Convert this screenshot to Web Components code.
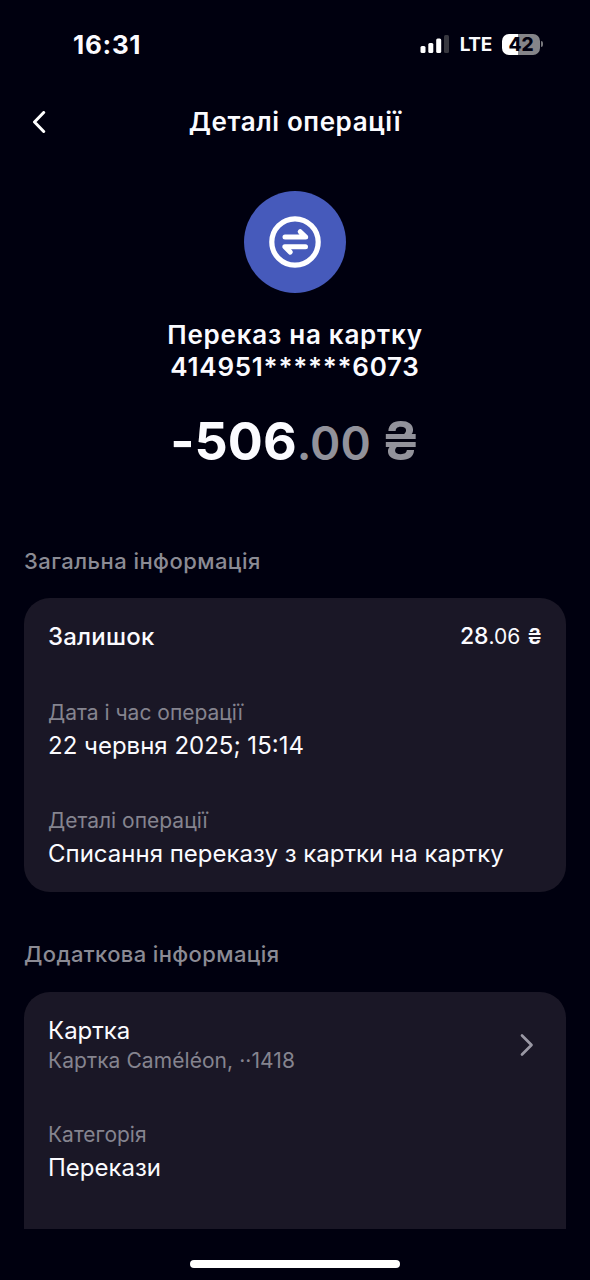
<!DOCTYPE html>
<html lang="uk">
<head>
  <meta charset="utf-8">
  <title>Деталі операції</title>
  <style>
    html, body {
      margin: 0;
      height: 100%;
      background: #00000f;
    }
    body {
      overflow: hidden;
      color: #fbfbff;
      font-family: Inter, "Liberation Sans", sans-serif;
    }
  </style>
</head>
<body>
  <operation-screen>
    <status-bar slot="status" time="16:31" network="LTE" battery="42"></status-bar>
    <nav-header slot="header">Деталі операції</nav-header>

    <operation-summary>
      <span slot="name">Переказ на картку</span>
      <span slot="number">414951******6073</span>
      <span slot="whole">-506</span>
      <span slot="cents">.00</span>
      <span slot="currency">₴</span>
    </operation-summary>

    <info-section>
      <span slot="title">Загальна інформація</span>
      <balance-row label="Залишок" whole="28" cents=".06" currency="₴"></balance-row>
      <info-field style="--gap-top: 46px; --gap: 3px">
        <span slot="label">Дата і час операції</span>
        <span slot="value">22 червня 2025; 15:14</span>
      </info-field>
      <info-field style="--gap-top: 45px; --gap: 3px">
        <span slot="label">Деталі операції</span>
        <span slot="value">Списання переказу з картки на картку</span>
      </info-field>
    </info-section>

    <info-section open-end>
      <span slot="title">Додаткова інформація</span>
      <link-row>
        <span slot="title">Картка</span>
        <span slot="subtitle">Картка Caméléon, ··1418</span>
      </link-row>
      <info-field style="--gap-top: 46px; --gap: 3px">
        <span slot="label">Категорія</span>
        <span slot="value">Перекази</span>
      </info-field>
    </info-section>

    <home-indicator slot="footer"></home-indicator>
  </operation-screen>

  <script>
    class BaseElement extends HTMLElement {
      constructor() {
        super();
        this.attachShadow({ mode: 'open' });
        const template = document.createElement('template');
        template.innerHTML = this.constructor.markup;
        this.shadowRoot.appendChild(template.content.cloneNode(true));
      }

      connectedCallback() {
        // fill every [data-attr] node with the attribute of that name
        this.shadowRoot.querySelectorAll('[data-attr]').forEach((node) => {
          node.textContent = this.getAttribute(node.dataset.attr);
        });
      }
    }

    class OperationScreen extends BaseElement {
      static markup = `
        <style>
          :host {
            display: flex;
            flex-direction: column;
            height: 1280px;
            width: 590px;
            overflow: hidden;
          }
          main {
            flex: 1;
            min-height: 0;
            overflow: hidden;
            padding: 0 24px;
          }
        </style>
        <slot name="status"></slot>
        <slot name="header"></slot>
        <main><slot></slot></main>
        <slot name="footer"></slot>
      `;
    }

    class StatusBar extends BaseElement {
      static markup = `
        <style>
          :host {
            display: flex;
            align-items: center;
            justify-content: space-between;
            height: 88px;
            padding: 0 47px 0 73px;
            flex: none;
            box-sizing: border-box;
          }
          .time {
            font-size: 26px;
            font-weight: 700;
            letter-spacing: 0.7px;
          }
          .right {
            display: flex;
            align-items: center;
          }
          .network {
            font-size: 19px;
            font-weight: 650;
            letter-spacing: -0.3px;
            margin: 1px 10px 0 10px;
          }
          .battery {
            width: 38px;
            height: 21px;
            border-radius: 7px;
            background: linear-gradient(90deg, #fff 42%, #858589 42%);
            color: #00000f;
            font-size: 19px;
            font-weight: 800;
            line-height: 21px;
            text-align: center;
          }
          .tip {
            width: 2px;
            height: 6px;
            margin-left: 1px;
            border-radius: 0 3px 3px 0;
            background: #77777c;
          }
        </style>
        <span class="time" data-attr="time"></span>
        <div class="right">
          <svg width="30" height="20" viewBox="0 0 30 20">
            <rect x="0.5" y="12" width="5" height="7" rx="1.5" fill="#fff"/>
            <rect x="8.3" y="9" width="5" height="10" rx="1.5" fill="#fff"/>
            <rect x="16.2" y="4.500" width="5" height="14.500" rx="1.5" fill="#fff"/>
            <rect x="24" y="1" width="5" height="18" rx="1.5" fill="#37373f"/>
          </svg>
          <span class="network" data-attr="network"></span>
          <div class="battery" data-attr="battery"></div>
          <div class="tip"></div>
        </div>
      `;
    }

    class NavHeader extends BaseElement {
      static markup = `
        <style>
          :host {
            display: grid;
            grid-template-columns: 60px 1fr 60px;
            align-items: center;
            height: 68px;
            flex: none;
          }
          svg {
            margin-left: 32px;
          }
          h1 {
            margin: 0;
            font-size: 26px;
            font-weight: 600;
            line-height: 32px;
            letter-spacing: 0.6px;
            text-align: center;
          }
        </style>
        <svg width="14" height="22" viewBox="0 0 14 22" fill="none" stroke="#fff" stroke-width="3" stroke-linecap="round" stroke-linejoin="round">
          <path d="M11.700 1.500 2.500 11l9.200 9.500"/>
        </svg>
        <h1><slot></slot></h1>
      `;
    }

    class OperationSummary extends BaseElement {
      static markup = `
        <style>
          :host {
            display: flex;
            flex-direction: column;
            align-items: center;
            padding-top: 35px;
            font-feature-settings: "calt" 0;
          }
          .icon {
            display: flex;
            align-items: center;
            justify-content: center;
            width: 102px;
            height: 102px;
            border-radius: 50%;
            background: #465abb;
          }
          .name, .number {
            font-size: 26px;
            font-weight: 600;
            line-height: 32px;
            white-space: nowrap;
          }
          .name {
            margin-top: 26px;
            letter-spacing: 0.75px;
          }
          .number {
            letter-spacing: 0.75px;
          }
          .amount {
            display: flex;
            align-items: baseline;
            margin-top: 28px;
            font-size: 52px;
            font-weight: 700;
            line-height: 60px;
            white-space: nowrap;
          }
          .cents {
            color: #92929b;
            font-size: 46px;
            font-weight: 600;
          }
          .currency {
            margin-left: 11px;
            color: #92929b;
            font-size: 54px;
            font-weight: 600;
          }
        </style>
        <div class="icon">
          <svg width="52" height="52" viewBox="0 0 52 52" fill="none" stroke="#fff" stroke-width="5" stroke-linecap="round" stroke-linejoin="round">
            <circle cx="26" cy="26" r="23.200" stroke-width="5.200"/>
            <path d="M16 21H36.700L31.200 15.700"/>
            <path d="M36.500 30.800H15.800L21.300 36.100"/>
          </svg>
        </div>
        <div class="name"><slot name="name"></slot></div>
        <div class="number"><slot name="number"></slot></div>
        <div class="amount">
          <slot name="whole"></slot>
          <span class="cents"><slot name="cents"></slot></span>
          <span class="currency"><slot name="currency"></slot></span>
        </div>
      `;
    }

    class InfoSection extends BaseElement {
      static markup = `
        <style>
          :host {
            display: block;
            padding-top: 74px;
          }
          :host([open-end]) {
            padding-top: 48px;
          }
          h2 {
            margin: 0 0 23px;
            color: #8b8b94;
            font-size: 22px;
            font-weight: 500;
            line-height: 28px;
            letter-spacing: 0.45px;
          }
          :host([open-end]) h2 {
            margin-bottom: 24px;
            letter-spacing: 0.38px;
          }
          .card {
            box-sizing: border-box;
            padding: 23px 24px 22px;
            border-radius: 26px;
            background: #1a1726;
          }
          /* the last card runs on under the bottom edge of the list */
          :host([open-end]) .card {
            height: 300px;
          }
        </style>
        <h2><slot name="title"></slot></h2>
        <div class="card"><slot></slot></div>
      `;
    }

    class BalanceRow extends BaseElement {
      static markup = `
        <style>
          :host {
            display: flex;
            justify-content: space-between;
            font-size: 24px;
            line-height: 32px;
          }
          .label {
            font-weight: 500;
            letter-spacing: 0.2px;
          }
          .amount {
            height: 32px;
            margin-top: -1px;
          }
          .whole {
            font-size: 23px;
            font-weight: 500;
          }
          .rest {
            font-size: 21px;
          }
          .currency {
            margin-left: 1px;
            font-weight: 600;
          }
        </style>
        <span class="label" data-attr="label"></span>
        <span class="amount"><span class="whole" data-attr="whole"></span><span class="rest"><span data-attr="cents"></span> <span class="currency" data-attr="currency"></span></span></span>
      `;
    }

    class InfoField extends BaseElement {
      static markup = `
        <style>
          :host {
            display: block;
            padding-top: var(--gap-top);
            white-space: nowrap;
          }
          .label {
            color: #85848f;
            font-size: 21px;
            line-height: 28px;
          }
          .value {
            margin-top: var(--gap);
            font-size: 24px;
            line-height: 32px;
          }
        </style>
        <div class="label"><slot name="label"></slot></div>
        <div class="value"><slot name="value"></slot></div>
      `;
    }

    class LinkRow extends BaseElement {
      static markup = `
        <style>
          :host {
            display: flex;
            align-items: center;
            justify-content: space-between;
          }
          .title {
            font-size: 24px;
            line-height: 32px;
          }
          .subtitle {
            color: #85848f;
            font-size: 21px;
            line-height: 28px;
            letter-spacing: 0.07px;
          }
          svg {
            margin-right: 8px;
          }
        </style>
        <div>
          <div class="title"><slot name="title"></slot></div>
          <div class="subtitle"><slot name="subtitle"></slot></div>
        </div>
        <svg width="15" height="24" viewBox="0 0 15 24" fill="none" stroke="#9a98a4" stroke-width="2.700" stroke-linecap="round" stroke-linejoin="round">
          <path d="M3 2.500 12.500 12 3 21.500"/>
        </svg>
      `;
    }

    class HomeIndicator extends BaseElement {
      static markup = `
        <style>
          :host {
            display: flex;
            justify-content: center;
            flex: none;
            height: 51px;
          }
          div {
            width: 210px;
            height: 8px;
            margin-top: 31px;
            border-radius: 4px;
            background: #fff;
          }
        </style>
        <div></div>
      `;
    }

    customElements.define('operation-screen', OperationScreen);
    customElements.define('status-bar', StatusBar);
    customElements.define('nav-header', NavHeader);
    customElements.define('operation-summary', OperationSummary);
    customElements.define('info-section', InfoSection);
    customElements.define('balance-row', BalanceRow);
    customElements.define('info-field', InfoField);
    customElements.define('link-row', LinkRow);
    customElements.define('home-indicator', HomeIndicator);
  </script>
</body>
</html>
